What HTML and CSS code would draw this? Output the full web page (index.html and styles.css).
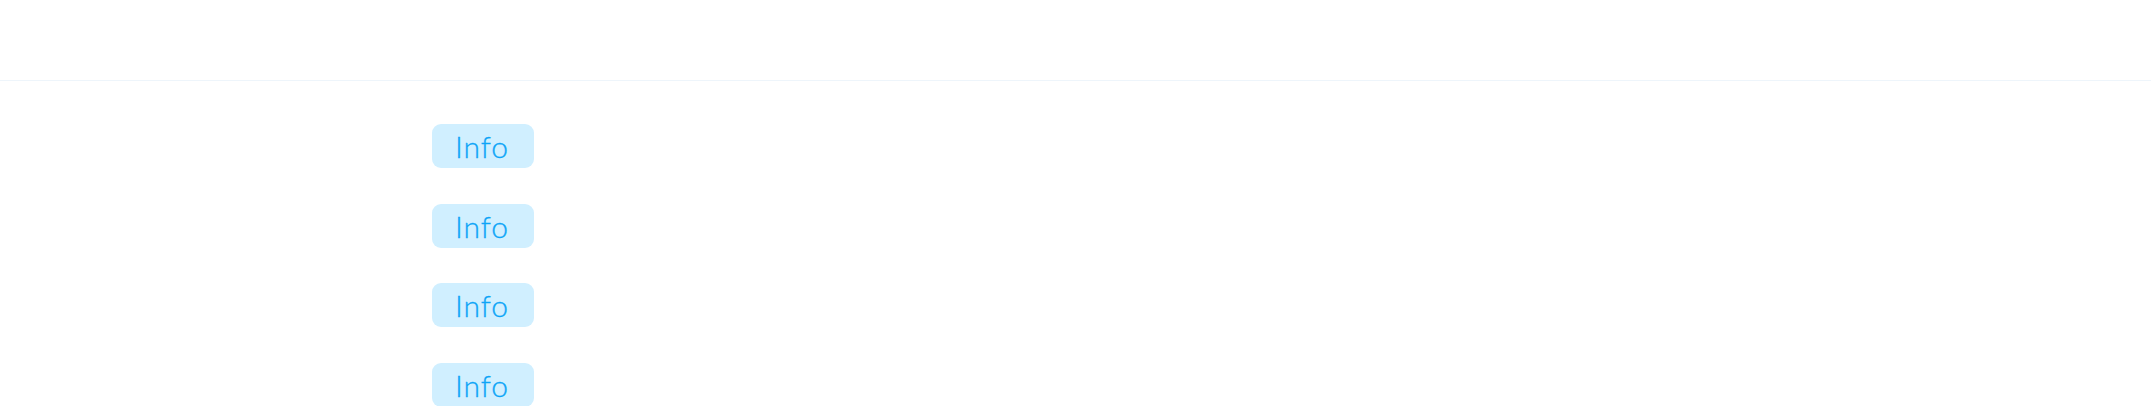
FILE: index.html
```html
<!DOCTYPE html>
<html>
<head>
<meta charset="utf-8">
<link rel="stylesheet" href="styles.css">
</head>
<body>
<header class="topbar"></header>
<main class="content">
  <span class="badge">Info</span>
  <span class="badge">Info</span>
  <span class="badge">Info</span>
  <span class="badge">Info</span>
</main>
</body>
</html>
```

FILE: styles.css
```css
html, body {
  margin: 0;
  padding: 0;
  background: #ffffff;
}
body {
  font-family: "Lato", "Open Sans", sans-serif;
  overflow: hidden;
}
.topbar {
  height: 80px;
  border-bottom: 1px solid #eef5fb;
  box-sizing: content-box;
}
.content {
  display: flex;
  flex-direction: column;
  align-items: flex-start;
  gap: 35.5px;
  padding: 43px 0 0 432px;
}
.badge {
  display: flex;
  align-items: center;
  justify-content: center;
  box-sizing: border-box;
  width: 102px;
  height: 44px;
  padding: 0 2px 0 0;
  border-radius: 9px;
  background: #d0efff;
  color: #0ea5f7;
  font-weight: 300;
  font-size: 30px;
  letter-spacing: 1px;
  line-height: 1;
  -webkit-text-stroke: 0.3px #0ea5f7;
}
```
